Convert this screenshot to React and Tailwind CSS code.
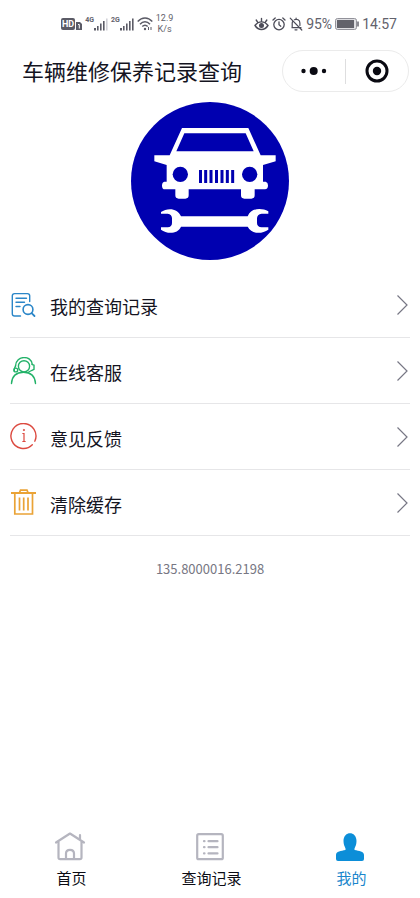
const FONT = "font-['Noto_Sans_CJK_SC','Noto_Sans',sans-serif]";

const menu = [
  { id: "records", label: "我的查询记录", Icon: RecordIcon },
  { id: "service", label: "在线客服", Icon: ServiceIcon },
  { id: "feedback", label: "意见反馈", Icon: InfoIcon },
  { id: "cache", label: "清除缓存", Icon: TrashIcon },
];

const tabs = [
  { id: "home", label: "首页", Icon: HomeIcon, active: false },
  { id: "query", label: "查询记录", Icon: ListIcon, active: false },
  { id: "mine", label: "我的", Icon: UserIcon, active: true },
];

export default function App() {
  return (
    <div className={`flex min-h-screen flex-col bg-white text-[#14141f] ${FONT}`}>
      <StatusBar />
      <TitleBar />
      <main className="flex flex-1 flex-col">
        <Logo />
        <ul className="mx-[10px] mt-3">
          {menu.map(({ id, label, Icon }) => (
            <li key={id} className="border-b border-[#e6e6e8]">
              <button type="button" className="flex h-[65px] w-full items-center text-left">
                <Icon />
                <span className="ml-3 flex-1 pt-0.5 text-[18px] leading-6">{label}</span>
                <Chevron />
              </button>
            </li>
          ))}
        </ul>
        <p className="mt-[23px] text-center text-[13px] leading-5 text-[#777783]">135.8000016.2198</p>
      </main>
      <nav className="grid grid-cols-3 pb-2">
        {tabs.map(({ id, label, Icon, active }) => (
          <a
            key={id}
            href={`#${id}`}
            aria-current={active ? "page" : undefined}
            className={`flex flex-col items-center gap-1 ${active ? "text-[#1a86cc]" : "text-[#0c0c14]"}`}
          >
            <Icon />
            <span className="pl-[3px] text-[15px] leading-6">{label}</span>
          </a>
        ))}
      </nav>
    </div>
  );
}

/* Status bar */
function StatusBar() {
  return (
    <div className="flex h-12 items-center justify-between pr-[23px] pl-[61px] font-[Roboto,sans-serif] text-[#62626c]">
      <div className="flex items-center gap-[3px]">
        <div className="flex items-center gap-px">
          <span className="rounded-xs bg-[#5b5b66] px-px text-[9px] leading-3 font-bold text-white">HD</span>
          <svg width="6" height="8" viewBox="0 0 6 8" className="mt-1">
            <path d="M0 0h4l2 2v6H0z" fill="#5b5b66" />
            <path d="M2 2.5h1.3v4" stroke="#fff" strokeWidth="1" fill="none" />
          </svg>
        </div>
        <Signal label="4G" weak />
        <Signal label="2G" />
        <svg width="16" height="14" viewBox="0 0 16 14" fill="none" stroke="#5b5b66" strokeWidth="1.5">
          <path d="M.7 4.6C5-.2 11-.2 15.300 4.600M3 7.200c3-3.300 7-3.300 10 0M5.300 9.600c1.700-1.900 3.700-1.900 5.400 0" />
          <circle cx="8" cy="12" r="1.2" fill="#5b5b66" stroke="none" />
          <path d="M11.500 10v3M14 10v3" strokeWidth="1" />
        </svg>
        <div className="text-center text-[9px] leading-[11px]">
          <div>12.9</div>
          <div>K/s</div>
        </div>
      </div>
      <div className="flex items-center gap-[3px] text-[14px]">
        <svg width="15" height="14" viewBox="0 0 15 14" fill="none" stroke="#4c4c58" strokeWidth="1.400" strokeLinecap="round">
          <path d="M1 8.500C4.500 3.600 10.500 3.600 14 8.500 10.500 13.800 4.500 13.800 1 8.500z" />
          <circle cx="7.500" cy="8.500" r="1.800" fill="#4c4c58" />
          <path d="M7.500 4.300V1.500M3.800 5.400L2.200 3M11.200 5.400L12.800 3" />
        </svg>
        <svg width="14" height="14" viewBox="0 0 14 14" fill="none" stroke="#4c4c58" strokeWidth="1.300" strokeLinecap="round">
          <circle cx="7" cy="7.600" r="5.200" />
          <path d="M7 4.800v3l1.800 1.400M1 3l2.200-2M13 3l-2.200-2" />
        </svg>
        <svg width="14" height="14" viewBox="0 0 14 14" fill="none" stroke="#4c4c58" strokeWidth="1.200" strokeLinecap="round">
          <path d="M3 10.700h9M3.200 10.500V6.200c0-1 .3-1.700.8-2.300M5.400 2.700C8 1.500 10.900 3.200 10.900 6v2.400M6 12.800h2M7.100 2.200V1M1.200 1.200l11.600 11.800" />
        </svg>
        <span>95%</span>
        <svg width="24" height="12" viewBox="0 0 24 12">
          <rect x=".5" y=".5" width="21" height="11" rx="2" fill="#dedee2" stroke="#92929a" />
          <rect x="2" y="2" width="17" height="8" fill="#62626b" />
          <path d="M23 3.500v5" stroke="#6e6e78" strokeWidth="1.600" />
        </svg>
        <span>14:57</span>
      </div>
    </div>
  );
}

function Signal({ label, weak }) {
  return (
    <div className="flex items-center">
      <span className="pb-2 text-[7px] leading-2 font-bold">{label}</span>
      <svg width="14" height="13" viewBox="0 0 14 13" fill="#5b5b66">
        <path d="M0 10h2v2.500H0zM3 8h1.600v4.500H3zM6 5.500h1.600v7H6zM9 3h1.600v9.500H9z" />
        <path d="M12 .5h1.600v12H12z" fill={weak ? "#d2d2d8" : "#5b5b66"} />
      </svg>
    </div>
  );
}

/* Title and mini-program capsule */
function TitleBar() {
  return (
    <header className="mt-0.5 flex items-center justify-between pr-[11px] pl-[22px]">
      <h1 className="pb-0.5 text-[22px] leading-8">车辆维修保养记录查询</h1>
      <div className="flex h-[42px] w-[127px] items-center rounded-full border border-[#ebebeb]">
        <button type="button" aria-label="更多" className="flex h-full flex-1 items-center justify-center">
          <svg width="26" height="8" viewBox="0 0 26 8" fill="#0a0a12">
            <circle cx="2.500" cy="4" r="2.200" />
            <circle cx="12.700" cy="4" r="4" />
            <circle cx="23" cy="4" r="2.200" />
          </svg>
        </button>
        <span className="h-[25px] w-px bg-[#dededf]" />
        <button type="button" aria-label="关闭" className="flex h-full flex-1 items-center justify-center">
          <svg width="24" height="24" viewBox="0 0 24 24">
            <circle cx="12" cy="12" r="10" fill="none" stroke="#0a0a12" strokeWidth="3" />
            <circle cx="12" cy="12" r="4.200" fill="#0a0a12" />
          </svg>
        </button>
      </div>
    </header>
  );
}

function Logo() {
  return (
    <svg width="158" height="158" viewBox="18 21 474 474" className="mx-auto mt-[10px]">
      <circle cx="255" cy="258" r="237" fill="#0000b0" />
      {/* car */}
      <path
        fill="#fff"
        fillRule="evenodd"
        d="M171 99H370L407 181H452V199L414 210V260H422Q429 262 429 271Q429 283 420 283H389V301Q389 311 379 311H358Q348 311 348 301V283H191V301Q191 311 181 311H161Q151 311 151 301V283H120Q111 283 111 272Q111 262 118 260H125V210L88 199V181H134ZM178 115L154 169H386L362 115Z"
      />
      <circle cx="166" cy="238" r="23" fill="#0000b0" />
      <circle cx="374" cy="238" r="23" fill="#0000b0" />
      <path
        d="M226.500 225v39M242 225v39M258 225v39M274.500 225v39M291 225v39M307 225v39M323 225v39"
        stroke="#0000b0"
        strokeWidth="9"
      />
      {/* wrench */}
      <path
        fill="#fff"
        d="M108 351C126 338 158 338 168 364H368C378 338 410 338 430 349V356H410Q396 358 396 370V384Q396 396 410 397H430V404C410 418 380 418 368 395H168C158 418 126 418 108 404V397H128Q141 396 141 384V370Q141 358 128 356H108Z"
      />
    </svg>
  );
}

/* Menu icons */
function RecordIcon() {
  return (
    <svg width="28" height="28" viewBox="0 0 28 28" fill="none" stroke="#2b86c8" strokeWidth="1.400" strokeLinecap="round" strokeLinejoin="round">
      <path d="M10.500 25H4.600Q2.300 25 2.300 22.700V4.800Q2.300 2.600 4.600 2.600H17.400Q19.700 2.600 19.700 4.800V10.500M6 7.200h10.500M6 11.300h8.500M6 15.500h4" />
      <circle cx="18" cy="18.500" r="4.900" strokeWidth="1.600" />
      <path d="M21.600 22.200l2.900 2.800" strokeWidth="1.800" />
    </svg>
  );
}

function ServiceIcon() {
  return (
    <svg width="28" height="28" viewBox="0 0 28 28" fill="none" stroke="#23b269" strokeWidth="1.400" strokeLinecap="round">
      <path d="M1.500 26.500C2 18.500 7 15.200 13.500 15.200S25 18.500 25.500 26.500" />
      <circle cx="14" cy="9.300" r="5.600" />
      <path d="M5.500 9C6-2 21.500-2 22.300 7.500" />
      <path d="M22 7.300l2 .8v4.200l-2.500 1.300M5.500 9L4.300 12v2M20.500 14l-2.500 1.500" />
      <circle cx="5.800" cy="13" r="1.900" />
    </svg>
  );
}

function InfoIcon() {
  return (
    <svg width="28" height="28" viewBox="0 0 28 28" fill="none" stroke="#dc4a40" strokeWidth="1.400" strokeLinecap="round">
      <path d="M22.300 21.800A12.500 12.500 0 1 1 24.800 18.200" />
      <path d="M12.800 10.500H14V18.500M12.800 18.500H15.200" strokeWidth="1.200" />
      <circle cx="13.800" cy="7" r=".6" fill="#dc4a40" strokeWidth=".8" />
    </svg>
  );
}

function TrashIcon() {
  return (
    <svg width="28" height="28" viewBox="0 0 28 28" fill="none" stroke="#eaa336" strokeWidth="1.700">
      <path d="M1 4H26" strokeWidth="2" />
      <path d="M9.500 3.500L10.500 1.200H17L18 3.500M4.800 4V25H22.500V4" />
      <path d="M9.500 8.500v13M13.700 8.500v13M18 8.500v13" />
    </svg>
  );
}

function Chevron() {
  return (
    <svg width="14" height="22" viewBox="0 0 14 22" fill="none" stroke="#777785" strokeWidth="1.200">
      <path d="M1.500 1.500l9.500 9.500-9.500 9.500" />
    </svg>
  );
}

/* Tab bar icons */
function HomeIcon() {
  return (
    <svg width="32" height="32" viewBox="0 0 32 32" fill="none" stroke="#b5b5bf" strokeWidth="2.200" strokeLinecap="round" strokeLinejoin="round">
      <path d="M2 12.500L16 3.500 30 12.500M26 9.500V5.200M4.500 11.500V27.500Q4.500 29.200 6.200 29.200H25.800Q27.500 29.200 27.500 27.500V11.500" />
      <path d="M12 29V23.500C12 18.700 20 18.700 20 23.500V29" />
    </svg>
  );
}

function ListIcon() {
  return (
    <svg width="32" height="32" viewBox="0 0 32 32" fill="none" stroke="#b5b5bf" strokeWidth="2.200" strokeLinecap="round">
      <rect x="3.200" y="4.200" width="25.600" height="25" rx="1.500" />
      <path d="M14.500 11.200h9M14.500 17.200h9M14.500 23.400h9M10 11.200h.5M10 17.200h.5M10 23.400h.5" />
    </svg>
  );
}

function UserIcon() {
  return (
    <svg width="32" height="32" viewBox="0 0 32 32" fill="#0c8ed8">
      <path d="M9.500 11C9.500 .500 22.500 .500 22.500 11C22.500 14.500 21.500 16 20.500 18.500V20C25 20.800 30 21.500 30 25V29Q30 31 28 31H4Q2 31 2 29V25C2 21.500 7 20.800 11.500 20V18.500C10.500 16 9.500 14.500 9.500 11Z" />
    </svg>
  );
}
